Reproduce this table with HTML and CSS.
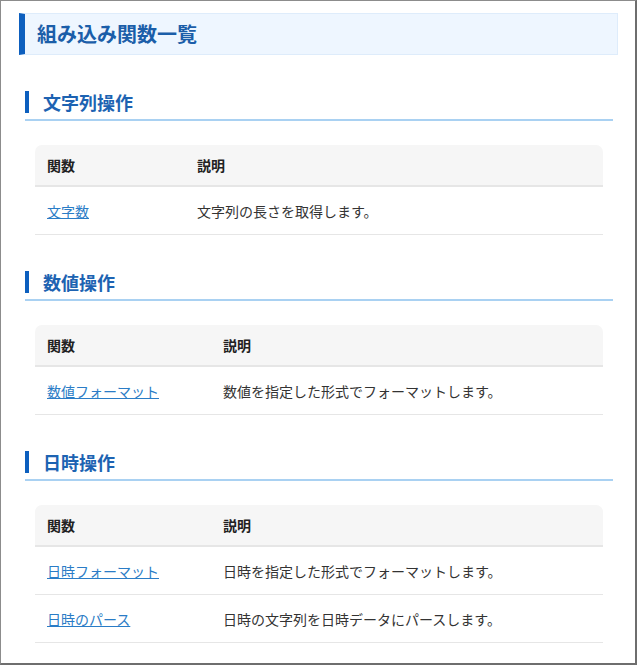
FILE: index.html
```html
<!DOCTYPE html>
<html lang="ja">
<head>
<meta charset="utf-8">
<title>組み込み関数一覧</title>
<link rel="stylesheet" href="styles.css">
</head>
<body>
<div class="frame">
  <h1 class="page-title">組み込み関数一覧</h1>

  <section class="section">
    <h2 class="section-title"><span class="section-label">文字列操作</span></h2>
    <table class="func-table">
      <colgroup><col class="col-s"><col></colgroup>
      <thead><tr><th>関数</th><th>説明</th></tr></thead>
      <tbody>
        <tr><td><a href="#">文字数</a></td><td>文字列の長さを取得します。</td></tr>
      </tbody>
    </table>
  </section>

  <section class="section">
    <h2 class="section-title"><span class="section-label">数値操作</span></h2>
    <table class="func-table">
      <colgroup><col class="col-l"><col></colgroup>
      <thead><tr><th>関数</th><th>説明</th></tr></thead>
      <tbody>
        <tr><td><a href="#">数値フォーマット</a></td><td>数値を指定した形式でフォーマットします。</td></tr>
      </tbody>
    </table>
  </section>

  <section class="section">
    <h2 class="section-title"><span class="section-label">日時操作</span></h2>
    <table class="func-table">
      <colgroup><col class="col-l"><col></colgroup>
      <thead><tr><th>関数</th><th>説明</th></tr></thead>
      <tbody>
        <tr><td><a href="#">日時フォーマット</a></td><td>日時を指定した形式でフォーマットします。</td></tr>
        <tr><td><a href="#">日時のパース</a></td><td>日時の文字列を日時データにパースします。</td></tr>
      </tbody>
    </table>
  </section>
</div>
</body>
</html>
```

FILE: styles.css
```css
html, body {
  margin: 0;
  padding: 0;
  background: #ffffff;
}

body {
  font-family: "Noto Sans CJK JP", "Noto Sans", sans-serif;
  color: #333333;
}

.frame {
  box-sizing: border-box;
  width: 637px;
  height: 665px;
  border-top: 1px solid #8c8c8c;
  border-left: 1px solid #8c8c8c;
  border-right: 2px solid #6e6e6e;
  border-bottom: 2px solid #6e6e6e;
  padding: 12px 17px 0 18px;
  overflow: hidden;
}

.page-title {
  margin: 0;
  height: 40px;
  line-height: 40px;
  padding-left: 12px;
  font-size: 20px;
  font-weight: 700;
  color: #1b5ea9;
  background: #eef6ff;
  border: 1px solid #deecfb;
  border-left: 6px solid #0d5fbe;
}

.section {
  margin: 36px 5px 0 6px;
}

.section-title {
  margin: 0;
  padding-bottom: 6px;
  border-bottom: 2px solid #a9d1f2;
  font-size: 18px;
  font-weight: 700;
  line-height: 22px;
  color: #1d63b2;
}

.section-label {
  display: block;
  border-left: 4px solid #0d5fbe;
  padding-left: 14px;
}

.func-table {
  width: calc(100% - 20px);
  margin: 24px 10px 0;
  border-collapse: separate;
  border-spacing: 0;
  table-layout: fixed;
  font-size: 14px;
}

.col-s { width: 150px; }
.col-l { width: 176px; }

.func-table th {
  height: 40px;
  padding: 0 12px;
  text-align: left;
  font-weight: 700;
  color: #222222;
  background: #f6f6f6;
  border-bottom: 2px solid #e6e6e6;
}

.func-table th:first-child { border-top-left-radius: 7px; }
.func-table th:last-child { border-top-right-radius: 7px; }

.func-table td {
  height: 47px;
  padding: 0 12px;
  border-bottom: 1px solid #e6e6e6;
  color: #333333;
}

.func-table a {
  color: #2a7cc6;
  text-decoration: underline;
}
```
